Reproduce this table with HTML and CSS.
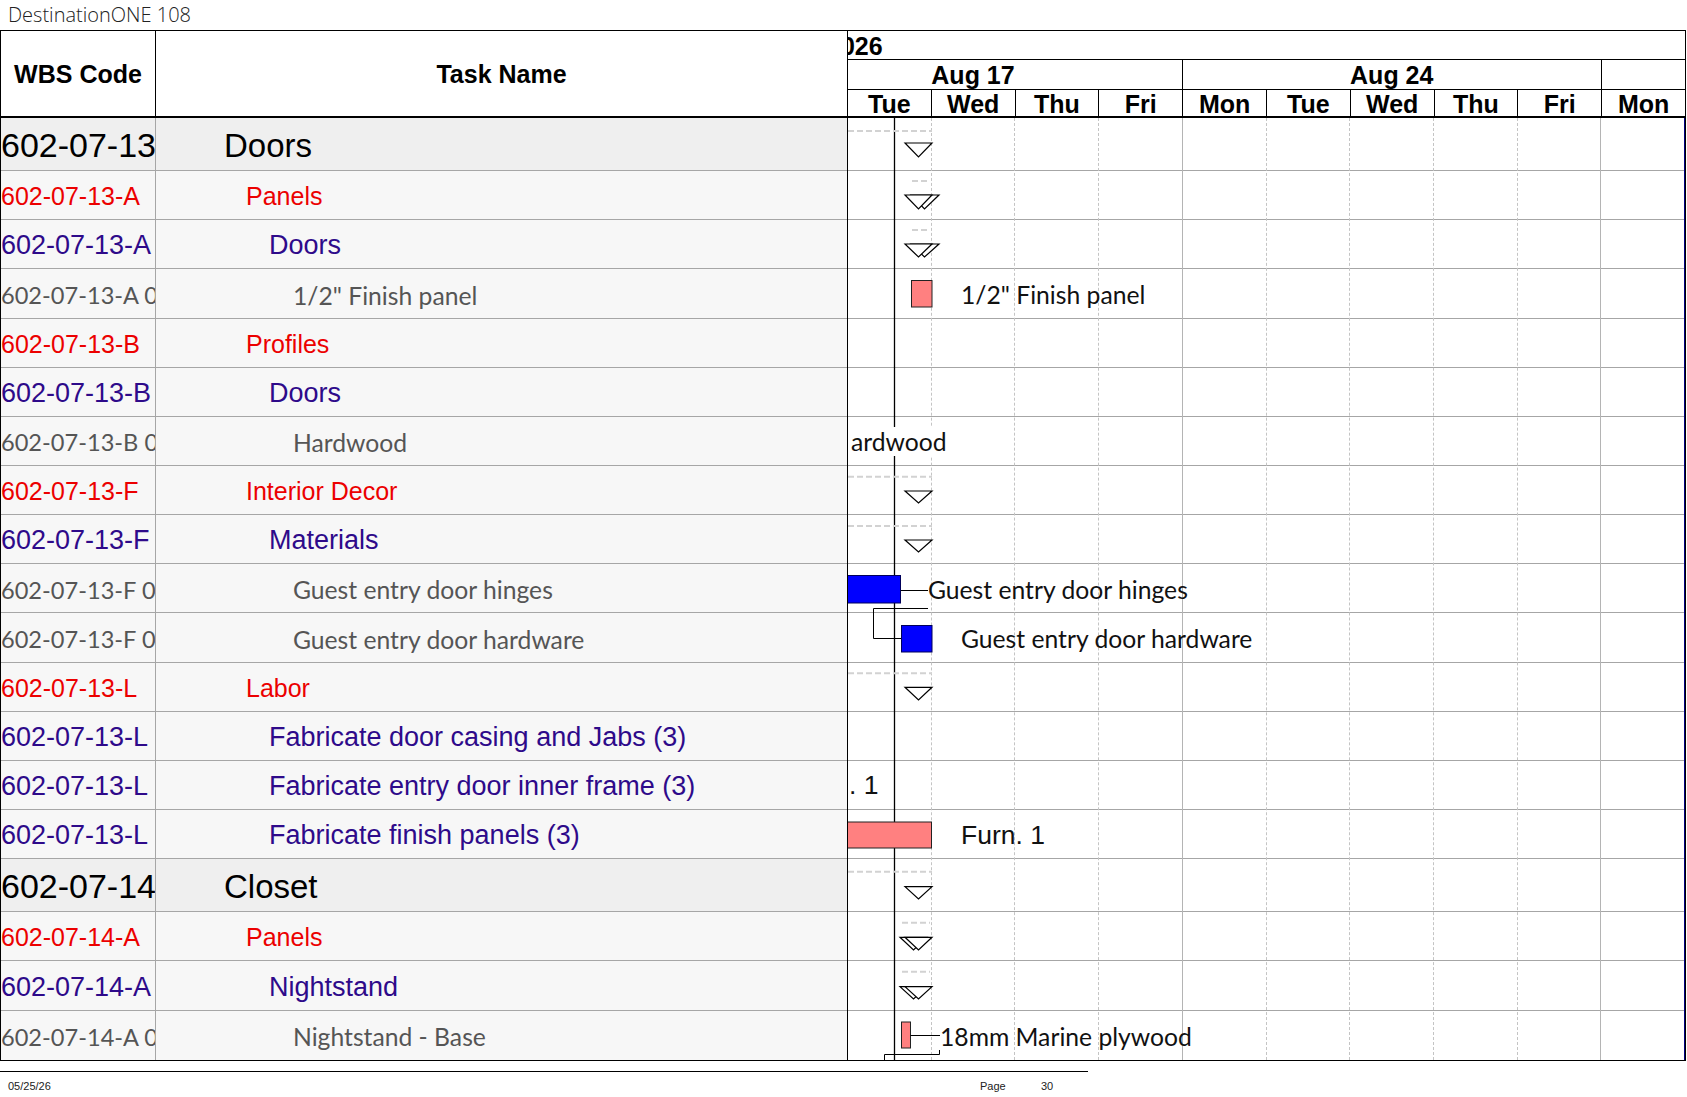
FILE: index.html
```html
<!DOCTYPE html>
<html>
<head>
<meta charset="utf-8">
<title>DestinationONE 108</title>
<link rel="stylesheet" href="styles.css">
</head>
<body>
<div class="title">DestinationONE 108</div>
<div class="sheet">
  <div class="left">
    <div class="lhead">
      <div class="th wbs">WBS Code</div>
      <div class="th task">Task Name</div>
    </div>
    <div class="lrow big"><div class="c wbs l0w">602-07-13</div><div class="c task l0">Doors</div></div>
    <div class="lrow"><div class="c wbs l1">602-07-13-A</div><div class="c task l1 i1">Panels</div></div>
    <div class="lrow"><div class="c wbs l2">602-07-13-A</div><div class="c task l2 i2">Doors</div></div>
    <div class="lrow"><div class="c wbs l3 w3">602-07-13-A 0</div><div class="c task l3 i3">1/2" Finish panel</div></div>
    <div class="lrow"><div class="c wbs l1">602-07-13-B</div><div class="c task l1 i1">Profiles</div></div>
    <div class="lrow"><div class="c wbs l2">602-07-13-B</div><div class="c task l2 i2">Doors</div></div>
    <div class="lrow"><div class="c wbs l3 w3">602-07-13-B 0</div><div class="c task l3 i3">Hardwood</div></div>
    <div class="lrow"><div class="c wbs l1">602-07-13-F</div><div class="c task l1 i1">Interior Decor</div></div>
    <div class="lrow"><div class="c wbs l2">602-07-13-F</div><div class="c task l2 i2">Materials</div></div>
    <div class="lrow"><div class="c wbs l3 w3">602-07-13-F 0</div><div class="c task l3 i3">Guest entry door hinges</div></div>
    <div class="lrow"><div class="c wbs l3 w3">602-07-13-F 0</div><div class="c task l3 i3">Guest entry door hardware</div></div>
    <div class="lrow"><div class="c wbs l1">602-07-13-L</div><div class="c task l1 i1">Labor</div></div>
    <div class="lrow"><div class="c wbs l2">602-07-13-L</div><div class="c task l2 i2">Fabricate door casing and Jabs (3)</div></div>
    <div class="lrow"><div class="c wbs l2">602-07-13-L</div><div class="c task l2 i2">Fabricate entry door inner frame (3)</div></div>
    <div class="lrow"><div class="c wbs l2">602-07-13-L</div><div class="c task l2 i2">Fabricate finish panels (3)</div></div>
    <div class="lrow big"><div class="c wbs l0w">602-07-14</div><div class="c task l0">Closet</div></div>
    <div class="lrow"><div class="c wbs l1">602-07-14-A</div><div class="c task l1 i1">Panels</div></div>
    <div class="lrow"><div class="c wbs l2">602-07-14-A</div><div class="c task l2 i2">Nightstand</div></div>
    <div class="lrow"><div class="c wbs l3 w3">602-07-14-A 0</div><div class="c task l3 i3">Nightstand - Base</div></div>
  </div>
  <div class="gantt">
    <div class="ghead">
      <div class="gh1"><span class="year">2026</span></div>
      <div class="gh2">
        <div class="wk wk1">Aug 17</div>
        <div class="wk wk2">Aug 24</div>
        <div class="wk wk3"></div>
      </div>
      <div class="gh3">
        <div class="d">Tue</div><div class="d">Wed</div><div class="d">Thu</div><div class="d">Fri</div>
        <div class="d">Mon</div><div class="d">Tue</div><div class="d">Wed</div><div class="d">Thu</div>
        <div class="d">Fri</div><div class="d">Mon</div>
      </div>
    </div>
    <div class="gbody">
      <div class="grid">
        <div class="gd"></div><div class="gd"></div><div class="gd"></div><div class="gd fri"></div>
        <div class="gd"></div><div class="gd"></div><div class="gd"></div><div class="gd"></div>
        <div class="gd fri"></div><div class="gd"></div>
      </div>
      <svg class="shapes" width="837" height="942" viewBox="0 0 837 942">
        <line class="status" x1="46.5" y1="0" x2="46.5" y2="942"/>
        <line class="dash" x1="0" y1="13" x2="84" y2="13"/>
        <line class="dash" x1="64" y1="63" x2="82" y2="63"/>
        <line class="dash" x1="64" y1="112" x2="82" y2="112"/>
        <line class="dash" x1="0" y1="358.7" x2="84" y2="358.7"/>
        <line class="dash" x1="0" y1="408" x2="84" y2="408"/>
        <line class="dash" x1="0" y1="555.3" x2="84" y2="555.3"/>
        <line class="dash" x1="0" y1="753.7" x2="84" y2="753.7"/>
        <line class="dash" x1="54" y1="804.7" x2="82" y2="804.7"/>
        <line class="dash" x1="54" y1="853.7" x2="82" y2="853.7"/>

        <polygon class="tri" points="57,25 84,25 70.5,39"/>
        <polygon class="tri" points="63,77 91,77 76.5,91"/>
        <polygon class="tri" points="57,77 84,77 70.5,91"/>
        <polygon class="tri" points="63,126 91,126 76.5,139"/>
        <polygon class="tri" points="57,126 84,126 70.5,139"/>
        <polygon class="tri" points="57,373 84,373 70.5,385"/>
        <polygon class="tri" points="57,422 84,422 70.5,434"/>
        <polygon class="tri" points="57,569.3 84,569.3 70.5,582"/>
        <polygon class="tri" points="57,768.7 84,768.7 70.5,781"/>
        <polygon class="tri" points="52,819.3 79,819.3 65.5,832"/>
        <polygon class="tri" points="57,819.3 84,819.3 70.5,832"/>
        <polygon class="tri" points="52,868.7 79,868.7 65.5,881"/>
        <polygon class="tri" points="57,868.7 84,868.7 70.5,881"/>

        <rect class="salmon" x="63.5" y="162.5" width="20.5" height="26.5"/>
        <rect class="blue" x="-1" y="457.5" width="53.5" height="27.5"/>
        <line class="link" x1="53" y1="472.5" x2="80" y2="472.5"/>
        <polyline class="link" points="80,490.5 25.5,490.5 25.5,520.5 53,520.5"/>
        <rect class="blue" x="53.5" y="507.5" width="30.5" height="26.5"/>
        <rect class="salmon" x="-1" y="704" width="84.5" height="26"/>
        <rect class="salmon" x="53.5" y="904" width="9" height="26"/>
        <line class="link" x1="62.5" y1="917.5" x2="92" y2="917.5"/>
        <polyline class="link" points="91.5,932 91.5,936.5 36.5,936.5 36.5,942"/>
      </svg>
      <div class="grow big"></div>
      <div class="grow"></div>
      <div class="grow"></div>
      <div class="grow"><span class="gl x113">1/2" Finish panel</span></div>
      <div class="grow"></div>
      <div class="grow"></div>
      <div class="grow"><span class="gl hw">ardwood</span></div>
      <div class="grow"></div>
      <div class="grow"></div>
      <div class="grow"><span class="gl x80">Guest entry door hinges</span></div>
      <div class="grow"><span class="gl x113">Guest entry door hardware</span></div>
      <div class="grow"></div>
      <div class="grow"></div>
      <div class="grow"><span class="gl arial x1">. 1</span></div>
      <div class="grow"><span class="gl arial x113">Furn. 1</span></div>
      <div class="grow big"></div>
      <div class="grow"></div>
      <div class="grow"></div>
      <div class="grow"><span class="gl x92">18mm Marine plywood</span></div>
    </div>
  </div>
</div>
<div class="footer">
  <span>05/25/26</span>
  <span>Page</span>
  <span>30</span>
</div>
</body>
</html>
```

FILE: styles.css
```css
* { box-sizing: border-box; }

body {
  margin: 0;
  width: 1687px;
  background: #fff;
  color: #000;
  font-family: "Liberation Sans", Arial, sans-serif;
}

.title {
  height: 30px;
  padding-left: 8px;
  font-family: "Open Sans", sans-serif;
  font-weight: 300;
  font-size: 20px;
  line-height: 29px;
  color: #222;
}

.sheet {
  display: flex;
  width: 1686px;
  border: 1px solid #000;
}

/* ---------- left table ---------- */
.left {
  width: 846px;
  flex: none;
  background: #f7f7f7;
}

.lhead {
  display: flex;
  height: 87px;
  border-bottom: 2px solid #000;
  background: #fff;
}

.th {
  display: flex;
  align-items: center;
  justify-content: center;
  padding-top: 2px;
  font-weight: bold;
  font-size: 25px;
}
.th.wbs { width: 155px; border-right: 1px solid #000; }
.th.task { flex: 1; }

.lrow {
  display: flex;
  height: 49.15px;
  border-bottom: 1px solid #a6a6a6;
}
.lrow.big {
  height: 53.2px;
  background: #efefef;
}
.lrow:last-child { border-bottom: 0; }

.c {
  display: flex;
  align-items: center;
  padding-top: 3px;
  white-space: nowrap;
  overflow: hidden;
}
.c.wbs {
  width: 155px;
  flex: none;
  border-right: 1px solid #a6a6a6;
}
.c.task { flex: 1; }

.l0w { font-size: 34px; color: #000; }
.l0 { font-size: 33px; color: #000; padding-left: 68px; }
.l1 { font-size: 25px; color: #ec0000; }
.l2 { font-size: 27px; color: #2e0a8a; }
.l3 {
  font-family: Lato, "Open Sans", sans-serif;
  font-size: 24.7px;
  color: #555;
}
.l3.w3 { font-size: 23.6px; }
.i1 { padding-left: 90px; }
.i2 { padding-left: 113px; }
.i3 { padding-left: 137px; }

/* ---------- gantt ---------- */
.gantt {
  width: 838px;
  flex: none;
  border-left: 1px solid #000;
  overflow: hidden;
  display: flex;
  flex-direction: column;
}

.ghead {
  height: 87px;
  font-weight: bold;
  font-size: 25px;
  background: #fff;
}

.gh1 {
  height: 29px;
  border-bottom: 1px solid #000;
  display: flex;
  align-items: center;
  padding-top: 2px;
  white-space: nowrap;
}
.year { margin-left: -21px; }

.gh2 {
  height: 30px;
  display: flex;
  border-bottom: 1px solid #000;
  line-height: 31px;
}
.wk { text-align: center; white-space: nowrap; }
.wk1 { width: 335px; padding-right: 84px; border-right: 1px solid #000; }
.wk2 { width: 418.5px; border-right: 1px solid #000; }
.wk3 { flex: 1; }

.gh3 {
  height: 28px;
  display: flex;
  border-bottom: 2px solid #000;
}
.d {
  flex: 1;
  border-right: 1px solid #000;
  text-align: center;
  line-height: 29px;
}
.d:last-child { border-right: 0; }

.gbody {
  position: relative;
  flex: 1;
  background: #fff;
}

.grid {
  position: absolute;
  left: 0;
  top: 0;
  right: 0;
  bottom: 0;
  display: flex;
  z-index: 0;
  border-right: 1px solid #000080;
}
.gd { flex: 1; border-right: 1px dashed #c4c4c4; }
.gd.fri { border-right: 1px solid #b4b4b4; }
.gd:last-child { border-right: 0; }

.shapes {
  position: absolute;
  left: 0;
  top: 0;
  z-index: 1;
  overflow: visible;
}
.status { stroke: #000; stroke-width: 1.3; }
.dash { stroke: #d2d2d2; stroke-width: 2; stroke-dasharray: 6 3; }
.tri { fill: #fff; stroke: #000; stroke-width: 1.2; }
.salmon { fill: #ff8080; stroke: #222; stroke-width: 1; }
.blue { fill: #0000ff; stroke: #00005a; stroke-width: 1; }
.link { fill: none; stroke: #000; stroke-width: 1; }

.grow {
  display: flex;
  align-items: center;
  padding-top: 2px;
  height: 49.15px;
  border-bottom: 1px solid #a6a6a6;
}
.grow.big { height: 53.2px; }
.grow:last-child { border-bottom: 0; }

.gl {
  position: relative;
  z-index: 3;
  white-space: nowrap;
  font-family: Lato, "Open Sans", sans-serif;
  font-size: 24.7px;
  color: #111;
}
.gl.arial {
  font-family: "Liberation Sans", Arial, sans-serif;
  font-size: 26.5px;
}
.x1 { margin-left: 1px; }
.x80 { margin-left: 80px; }
.x92 { margin-left: 92px; }
.x113 { margin-left: 113px; }
.hw { margin-left: 3px; background: #fff; }

/* ---------- footer ---------- */
.footer {
  margin-top: 10px;
  width: 1088px;
  border-top: 1px solid #000;
  display: grid;
  grid-template-columns: 972px 61px auto;
  padding-left: 8px;
  padding-top: 8px;
  font-size: 11px;
  color: #222;
}
```
